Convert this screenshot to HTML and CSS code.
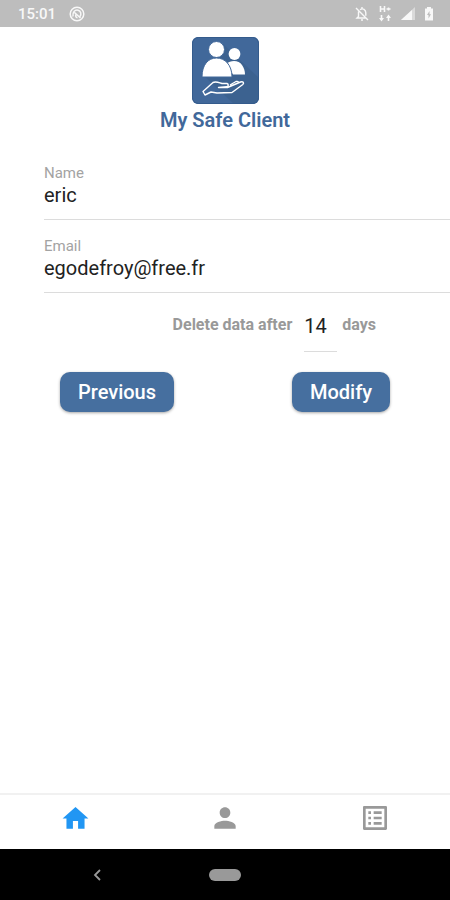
FILE: index.html
```html
<!DOCTYPE html>
<html lang="en">
<head>
<meta charset="utf-8">
<meta name="viewport" content="width=device-width, initial-scale=1">
<title>My Safe Client</title>
<link rel="stylesheet" href="styles.css">
</head>
<body>
<header class="status">
  <div class="status-group">
    <span class="clock">15:01</span>
    <svg width="16" height="16" viewBox="0 0 16 16" fill="none" stroke="currentColor" stroke-width="1.5" aria-hidden="true">
      <circle cx="8" cy="8" r="6.8"/>
      <path d="M4 10.5C3.2 6 6 3.600 9 4.200c3 .7 3.600 4 2 6.300M5.500 6.500l6 5.500M7 8.500c-.8 1.500 0 3 1.500 3.200"/>
    </svg>
  </div>
  <div class="status-group signals">
    <svg width="16" height="16" viewBox="0 0 16 16" fill="none" stroke="currentColor" stroke-width="1.4" aria-hidden="true">
      <path d="M2 2l12 12M4.500 5.500v5L3 12h8.500M6 3.800c3-2.200 5.800 0 5.800 3v3M7 14h2M8 1v2"/>
    </svg>
    <svg width="14" height="18" viewBox="0 0 14 18" fill="none" stroke="currentColor" stroke-width="1.6" aria-hidden="true">
      <path d="M2.500 1v6M6.500 1v6M2.500 4h4M8.500 4h4M10.500 2.500v3M3.500 10v5M10.500 16v-5"/>
      <path d="M1 13h5L3.500 16.500zM8 13h5L10.500 9.500z" fill="currentColor" stroke="none"/>
    </svg>
    <svg width="16" height="14" viewBox="0 0 16 14" aria-hidden="true">
      <path d="M15 0v13H1z" fill="currentColor" opacity=".5"/>
      <path d="M12 3v10H1z" fill="currentColor"/>
    </svg>
    <svg width="10" height="14" viewBox="0 0 10 14" aria-hidden="true">
      <path fill="currentColor" fill-rule="evenodd" d="M3 0h4v1.500h2v12H1v-12h2zM5.500 4L3 8h1.500v3.500L7 7.200H5.500z"/>
    </svg>
  </div>
</header>

<main class="content">
  <div class="brand">
    <svg class="logo" viewBox="0 0 67 67" aria-hidden="true">
      <rect width="67" height="67" rx="6" fill="#41689a"/>
      <path d="M31 7l36 34v20a6 6 0 0 1-6 6H42L12 39z" fill="#375a86" opacity=".45"/>
      <rect x=".5" y=".5" width="66" height="66" rx="6" fill="none" stroke="#345b8c"/>
      <g fill="#fff">
        <circle cx="42.500" cy="17" r="5.900"/>
        <path d="M34 27c5-4.500 13-4 16 1 2 3 3 6 3 9.500H41z"/>
        <g stroke="#41689a" stroke-width="1">
          <circle cx="24.500" cy="12.500" r="8"/>
          <path d="M10 40C10 28 16 21 24.500 21S40 28 40 40z"/>
        </g>
      </g>
      <path d="M11 54.500l10-9c3-1.500 6 .2 9 1h5c2 .8 1.500 3-.5 3.200l-8 .8h9l13-5.500c2.500-.8 4 .8 2.300 2.500L40 55.500 25 56l-6-1-6 3zM38 48l6-3.500c2.500-.6 3 1 1.500 2" fill="none" stroke="#fff" stroke-width="1.400" stroke-linejoin="round"/>
    </svg>
    <h1 class="title">My Safe Client</h1>
  </div>

  <form class="form">
    <div class="field">
      <label class="label" for="name">Name</label>
      <input class="input" id="name" type="text" value="eric">
    </div>
    <div class="field">
      <label class="label" for="email">Email</label>
      <input class="input" id="email" type="email" value="egodefroy@free.fr">
    </div>
    <div class="retention">
      <label class="hint" for="days">Delete data after</label>
      <input class="days" id="days" type="text" inputmode="numeric" value="14">
      <span class="hint">days</span>
    </div>
    <div class="actions">
      <button class="button" type="button">Previous</button>
      <button class="button" type="button">Modify</button>
    </div>
  </form>
</main>

<nav class="tabs">
  <a class="tab active" href="#home" aria-label="Home">
    <svg width="31" height="31" viewBox="0 0 24 24" fill="currentColor"><path d="M10 20v-6h4v6h5v-8h3L12 3 2 12h3v8z"/></svg>
  </a>
  <a class="tab" href="#profile" aria-label="Profile">
    <svg width="32" height="32" viewBox="0 0 24 24" fill="currentColor"><path d="M12 12c2.210 0 4-1.790 4-4s-1.790-4-4-4-4 1.790-4 4 1.790 4 4 4zm0 2c-2.670 0-8 1.340-8 4v2h16v-2c0-2.660-5.330-4-8-4z"/></svg>
  </a>
  <a class="tab" href="#list" aria-label="List">
    <svg width="32" height="32" viewBox="0 0 24 24" fill="currentColor"><path d="M19 5v14H5V5h14m1.100-2H3.900c-.5 0-.9.4-.9.900v16.200c0 .4.4.9.9.9h16.200c.4 0 .9-.5.9-.9V3.900c0-.5-.5-.9-.9-.9zM11 7h6v2h-6V7zm0 4h6v2h-6v-2zm0 4h6v2h-6zM7 7h2v2H7zm0 4h2v2H7zm0 4h2v2H7z"/></svg>
  </a>
</nav>

<footer class="system">
  <button class="system-button" type="button" aria-label="Back">
    <svg width="10" height="12" viewBox="0 0 10 12" fill="none" stroke="#999" stroke-width="1.8"><path d="M8 1L3 6l5 5"/></svg>
  </button>
  <button class="system-button" type="button" aria-label="System home"><span class="pill"></span></button>
  <span></span>
</footer>
</body>
</html>
```
FILE: styles.css
```css
* {
  box-sizing: border-box;
}

body {
  margin: 0;
  min-height: 100vh;
  display: flex;
  flex-direction: column;
  overflow-x: hidden;
  background: #fff;
  color: #222;
  font-family: Roboto, "Liberation Sans", sans-serif;
}

svg {
  display: block;
}

.status {
  display: flex;
  justify-content: space-between;
  align-items: center;
  height: 27px;
  padding: 0 16px 0 18px;
  background: #bdbdbd;
  color: #f8f8f8;
}

.status-group {
  display: flex;
  align-items: center;
  gap: 13px;
}

.signals {
  gap: 8px;
}

.clock {
  font-size: 15px;
  font-weight: 500;
  line-height: 28px;
}

.content {
  flex: 1;
  padding-top: 10px;
}

.brand {
  display: flex;
  flex-direction: column;
  align-items: center;
}

.logo {
  width: 67px;
  height: 67px;
}

.title {
  margin: 4px 0 0;
  color: #41689a;
  font-size: 20px;
  font-weight: 600;
  line-height: 24px;
}

.form {
  padding-top: 32px;
}

.field {
  display: flex;
  flex-direction: column;
  height: 56px;
  margin: 0 0 17px 44px;
  border-bottom: 1px solid #dcdcdc;
}

.label {
  color: #a3a3a3;
  font-size: 15px;
  line-height: 18px;
}

.input,
.days {
  width: 100%;
  padding: 0;
  border: 0;
  background: transparent;
  color: #222;
  font-family: inherit;
  font-size: 20px;
  line-height: 26px;
}

.retention {
  display: flex;
  align-items: flex-start;
  justify-content: flex-end;
  margin-right: 74px;
}

.hint {
  color: #999;
  font-size: 16px;
  font-weight: 700;
  line-height: 30px;
}

.days {
  width: 33px;
  height: 42px;
  margin: 0 5px 0 12px;
  padding-bottom: 10px;
  border-bottom: 1px solid #dcdcdc;
}

.actions {
  display: flex;
  justify-content: space-between;
  margin: 20px 60px 0;
}

.button {
  height: 40px;
  padding: 0 18px;
  border: 0;
  border-radius: 10px;
  background: #466f9f;
  box-shadow: 0 1px 3px rgba(0, 0, 0, 0.35);
  color: #fff;
  font-family: inherit;
  font-size: 20px;
  font-weight: 500;
}

.tabs {
  display: grid;
  grid-template-columns: repeat(3, 1fr);
  height: 56px;
  padding-bottom: 8px;
  border-top: 2px solid #f1f1f1;
}

.tab {
  display: flex;
  align-items: center;
  justify-content: center;
  color: #999;
}

.active {
  color: #2196f3;
}

.system {
  display: grid;
  grid-template-columns: 1fr 1fr 1fr;
  align-items: center;
  height: 51px;
  padding: 0 33px;
  background: #000;
}

.system-button {
  display: flex;
  justify-content: center;
  padding: 0;
  border: 0;
  background: transparent;
}

.pill {
  width: 32px;
  height: 12px;
  border-radius: 6px;
  background: #999;
}
```
